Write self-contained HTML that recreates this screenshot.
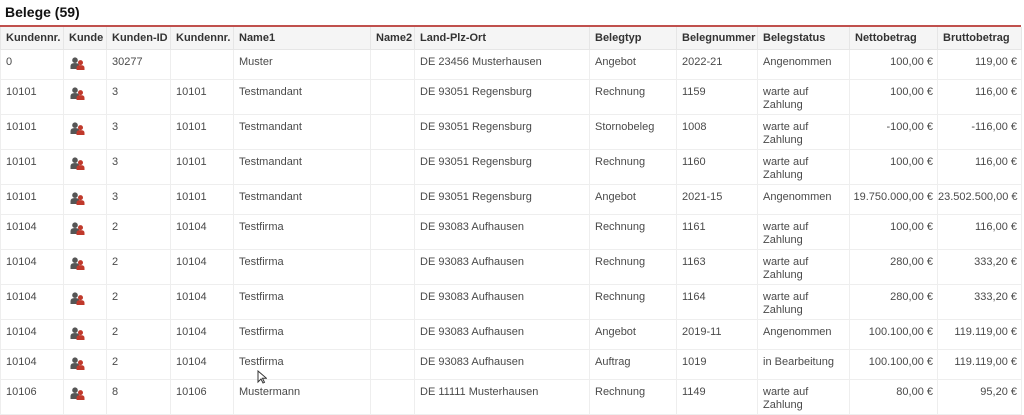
<!DOCTYPE html>
<html><head><meta charset="utf-8"><style>
body{margin:0;background:#fff;font-family:"Liberation Sans",sans-serif;color:#4a4a4a;width:1024px;height:414px;overflow:hidden}
h1{font-size:14px;font-weight:bold;color:#111;margin:0;padding:4px 0 0 5px;height:21px;line-height:16px}
.rl{position:absolute;top:25px;left:0;width:1021px;height:2px;background:#c0504d}
table{position:absolute;top:27px;left:0;border-collapse:collapse;table-layout:fixed;width:1021px;font-size:11px}
th{background:#f5f5f5;color:#333;font-weight:bold;text-align:left;height:22px;padding:0 4px 0 5px;border:1px solid #e6e6e6;border-top:0;white-space:nowrap;overflow:hidden}
td{padding:6px 5px 0 5px;vertical-align:top;border:1px solid #eeeeee;line-height:13px}
tr.s td{height:23px}tr.d td{height:28px}
td.r{text-align:right;white-space:nowrap;padding-right:4px;padding-left:0;overflow:hidden}
.ic{display:inline-block;position:relative;width:15px;height:13px;margin-left:1px;top:1px}
</style></head><body>
<h1>Belege (59)</h1><div class="rl"></div>
<svg width="0" height="0" style="position:absolute"><defs><symbol id="p" viewBox="0 0 15 13"><circle cx="5" cy="3.2" r="2.8" fill="#555"/><path d="M0.5 12v-3q0-3 4.5-3t4.5 3v3z" fill="#555"/><circle cx="10.5" cy="5.6" r="2.5" fill="#c0392b"/><path d="M6.5 13v-2.2q0-2.7 4-2.7t4 2.7v2.2z" fill="#c0392b"/></symbol></defs></svg>
<table>
<colgroup><col style="width:63px"><col style="width:43px"><col style="width:64px"><col style="width:63px"><col style="width:137px"><col style="width:44px"><col style="width:175px"><col style="width:87px"><col style="width:81px"><col style="width:92px"><col style="width:88px"><col style="width:84px"></colgroup>
<tr><th>Kundennr.</th><th>Kunde</th><th>Kunden-ID</th><th>Kundennr.</th><th>Name1</th><th>Name2</th><th>Land-Plz-Ort</th><th>Belegtyp</th><th>Belegnummer</th><th>Belegstatus</th><th>Nettobetrag</th><th>Bruttobetrag</th></tr>
<tr class="s"><td>0</td><td><svg class="ic"><use href="#p"/></svg></td><td>30277</td><td></td><td>Muster</td><td></td><td>DE 23456 Musterhausen</td><td>Angebot</td><td>2022-21</td><td>Angenommen</td><td class="r">100,00 €</td><td class="r">119,00 €</td></tr>
<tr class="d"><td>10101</td><td><svg class="ic"><use href="#p"/></svg></td><td>3</td><td>10101</td><td>Testmandant</td><td></td><td>DE 93051 Regensburg</td><td>Rechnung</td><td>1159</td><td>warte auf Zahlung</td><td class="r">100,00 €</td><td class="r">116,00 €</td></tr>
<tr class="d"><td>10101</td><td><svg class="ic"><use href="#p"/></svg></td><td>3</td><td>10101</td><td>Testmandant</td><td></td><td>DE 93051 Regensburg</td><td>Stornobeleg</td><td>1008</td><td>warte auf Zahlung</td><td class="r">-100,00 €</td><td class="r">-116,00 €</td></tr>
<tr class="d"><td>10101</td><td><svg class="ic"><use href="#p"/></svg></td><td>3</td><td>10101</td><td>Testmandant</td><td></td><td>DE 93051 Regensburg</td><td>Rechnung</td><td>1160</td><td>warte auf Zahlung</td><td class="r">100,00 €</td><td class="r">116,00 €</td></tr>
<tr class="s"><td>10101</td><td><svg class="ic"><use href="#p"/></svg></td><td>3</td><td>10101</td><td>Testmandant</td><td></td><td>DE 93051 Regensburg</td><td>Angebot</td><td>2021-15</td><td>Angenommen</td><td class="r">19.750.000,00 €</td><td class="r">23.502.500,00 €</td></tr>
<tr class="d"><td>10104</td><td><svg class="ic"><use href="#p"/></svg></td><td>2</td><td>10104</td><td>Testfirma</td><td></td><td>DE 93083 Aufhausen</td><td>Rechnung</td><td>1161</td><td>warte auf Zahlung</td><td class="r">100,00 €</td><td class="r">116,00 €</td></tr>
<tr class="d"><td>10104</td><td><svg class="ic"><use href="#p"/></svg></td><td>2</td><td>10104</td><td>Testfirma</td><td></td><td>DE 93083 Aufhausen</td><td>Rechnung</td><td>1163</td><td>warte auf Zahlung</td><td class="r">280,00 €</td><td class="r">333,20 €</td></tr>
<tr class="d"><td>10104</td><td><svg class="ic"><use href="#p"/></svg></td><td>2</td><td>10104</td><td>Testfirma</td><td></td><td>DE 93083 Aufhausen</td><td>Rechnung</td><td>1164</td><td>warte auf Zahlung</td><td class="r">280,00 €</td><td class="r">333,20 €</td></tr>
<tr class="s"><td>10104</td><td><svg class="ic"><use href="#p"/></svg></td><td>2</td><td>10104</td><td>Testfirma</td><td></td><td>DE 93083 Aufhausen</td><td>Angebot</td><td>2019-11</td><td>Angenommen</td><td class="r">100.100,00 €</td><td class="r">119.119,00 €</td></tr>
<tr class="s"><td>10104</td><td><svg class="ic"><use href="#p"/></svg></td><td>2</td><td>10104</td><td>Testfirma</td><td></td><td>DE 93083 Aufhausen</td><td>Auftrag</td><td>1019</td><td>in Bearbeitung</td><td class="r">100.100,00 €</td><td class="r">119.119,00 €</td></tr>
<tr class="d"><td>10106</td><td><svg class="ic"><use href="#p"/></svg></td><td>8</td><td>10106</td><td>Mustermann</td><td></td><td>DE 11111 Musterhausen</td><td>Rechnung</td><td>1149</td><td>warte auf Zahlung</td><td class="r">80,00 €</td><td class="r">95,20 €</td></tr>
</table>
<svg style="position:absolute;left:257px;top:370px" width="10" height="14" viewBox="0 0 10 14"><path d="M1 1v11l3-3 2 4 1.5-.7-2-4h4z" fill="#fff" stroke="#333" stroke-width="1"/></svg>
</body></html>
